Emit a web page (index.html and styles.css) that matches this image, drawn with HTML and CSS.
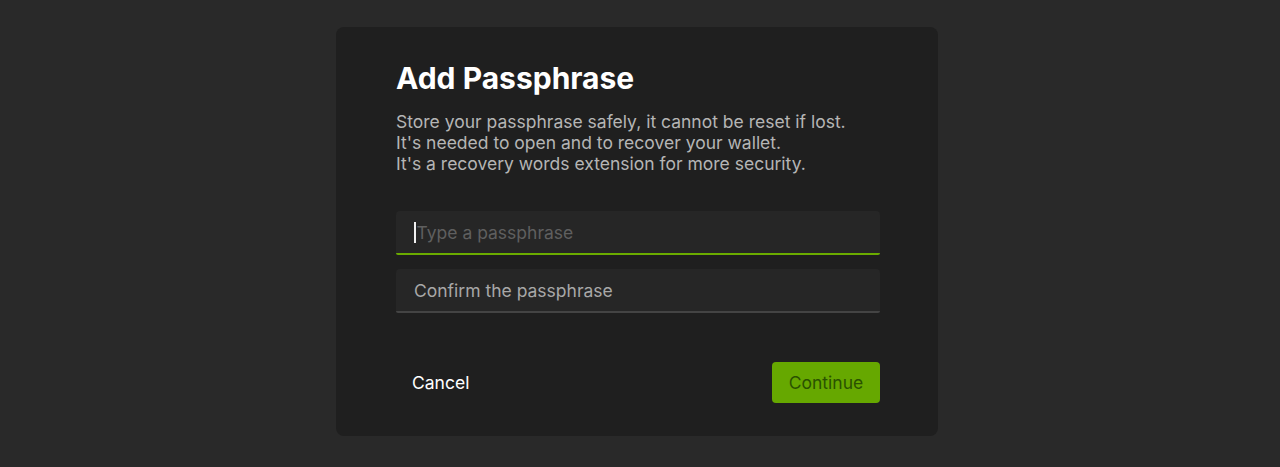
FILE: index.html
```html
<!DOCTYPE html>
<html lang="en">
<head>
<meta charset="utf-8">
<link rel="stylesheet" href="styles.css">
</head>
<body>
<div class="page">
  <div class="modal">
    <h1 class="title">Add Passphrase</h1>
    <p class="desc">Store your passphrase safely, it cannot be reset if lost.<br>It's needed to open and to recover your wallet.<br>It's a recovery words extension for more security.</p>
    <div class="fields">
      <div class="field focused"><span class="caret"></span><span class="ph dim">Type a passphrase</span></div>
      <div class="field"><span class="ph">Confirm the passphrase</span></div>
    </div>
    <div class="actions">
      <button class="btn cancel">Cancel</button>
      <button class="btn primary">Continue</button>
    </div>
  </div>
</div>
</body>
</html>
```
FILE: styles.css
```css
html, body { margin: 0; padding: 0; }
body {
  background: #292929;
  font-family: Inter, "Noto Sans", sans-serif;
  width: 1280px;
  height: 467px;
  overflow: hidden;
}
.page {
  display: flex;
  justify-content: center;
  padding-top: 27px;
  padding-right: 6px;
}
.modal {
  width: 484px;
  background: #1f1f1f;
  border-radius: 8px;
  padding: 34px 58px 33px 60px;
}
.title {
  margin: 0;
  font-size: 30px;
  line-height: 35px;
  font-weight: 700;
  color: #ffffff;
  letter-spacing: 0;
}
.desc {
  margin: 15px 0 0;
  font-size: 17.5px;
  line-height: 21px;
  color: #b5b5b5;
}
.fields {
  display: flex;
  flex-direction: column;
  gap: 14px;
  margin-top: 37px;
}
.field {
  height: 42px;
  background: #262626;
  border-bottom: 2px solid #444444;
  border-radius: 4px 4px 2px 2px;
  display: flex;
  align-items: center;
  padding-left: 18px;
  font-size: 17.5px;
}
.field.focused { border-bottom-color: #6aab00; }
.caret {
  width: 1.5px;
  height: 21px;
  background: #f0f0f0;
  margin-right: 1px;
}
.ph { color: #a8a8a8; }
.ph.dim { color: #5f5f5f; }
.actions {
  display: flex;
  justify-content: space-between;
  align-items: center;
  margin-top: 49px;
}
.btn {
  font-family: inherit;
  font-size: 17.5px;
  border: none;
  cursor: pointer;
}
.cancel {
  background: transparent;
  color: #ffffff;
  padding: 10px 16px;
  height: 41px;
}
.primary {
  background: #66a800;
  color: #2a5200;
  width: 108px;
  height: 41px;
  border-radius: 4px;
}
```
